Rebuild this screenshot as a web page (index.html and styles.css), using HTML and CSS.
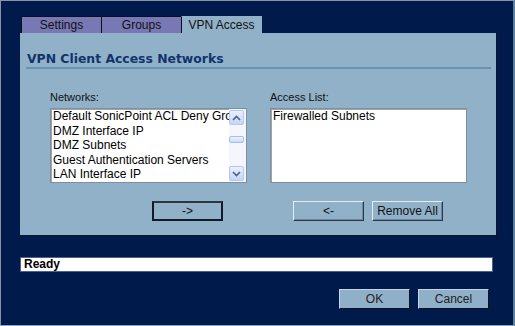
FILE: index.html
```html
<!DOCTYPE html>
<html>
<head>
<meta charset="utf-8">
<link rel="stylesheet" href="styles.css">
</head>
<body>
<div class="frame">
  <div class="tabs">
    <div class="tab">Settings</div>
    <div class="tab">Groups</div>
    <div class="tab active">VPN Access</div>
  </div>
  <div class="panel">
    <h1 class="heading">VPN Client Access Networks</h1>
    <div class="lists">
      <div class="col">
        <div class="label">Networks:</div>
        <div class="listbox">
          <div class="items">
            <div>Default SonicPoint ACL Deny Group</div>
            <div>DMZ Interface IP</div>
            <div>DMZ Subnets</div>
            <div>Guest Authentication Servers</div>
            <div>LAN Interface IP</div>
          </div>
          <div class="scrollbar">
            <div class="sbtn"><svg width="9" height="6" viewBox="0 0 9 6"><path d="M1 5 L4.5 1.5 L8 5" fill="none" stroke="#4d6185" stroke-width="1.6"/></svg></div>
            <div class="track"><div class="thumb"></div></div>
            <div class="sbtn"><svg width="9" height="6" viewBox="0 0 9 6"><path d="M1 1 L4.5 4.5 L8 1" fill="none" stroke="#4d6185" stroke-width="1.6"/></svg></div>
          </div>
        </div>
        <div class="btnrow center">
          <button class="btn primary">-&gt;</button>
        </div>
      </div>
      <div class="col">
        <div class="label">Access List:</div>
        <div class="listbox">
          <div class="items">
            <div>Firewalled Subnets</div>
          </div>
        </div>
        <div class="btnrow right">
          <button class="btn">&lt;-</button>
          <button class="btn">Remove All</button>
        </div>
      </div>
    </div>
  </div>
  <div class="status">Ready</div>
  <div class="actions">
    <button class="dbtn">OK</button>
    <button class="dbtn">Cancel</button>
  </div>
</div>
</body>
</html>
```
FILE: styles.css
```css
html, body {
  margin: 0;
  padding: 0;
  background: #001b4b;
}
.frame {
  box-sizing: border-box;
  width: 515px;
  height: 326px;
  background: #001b4b;
  border-top: 1px solid #8a93a3;
  border-left: 1px solid #8a93a3;
  border-right: 2px solid #5f7f9f;
  border-bottom: 1px solid #8aa6c0;
  padding: 15px 0 0 19px;
  font-family: "Liberation Sans", Arial, sans-serif;
}
.tabs {
  display: flex;
  height: 17px;
  padding-left: 1px;
}
.tab {
  box-sizing: border-box;
  width: 81px;
  height: 17px;
  background: #7878b4;
  border: 1px solid #0a0f28;
  border-bottom: none;
  margin-right: -1px;
  color: #111;
  font-size: 12px;
  line-height: 16px;
  text-align: center;
}
.tab.active {
  background: #90b1c8;
  border-color: #90b1c8;
  border-left: 1px solid #0a0f28;
}
.panel {
  box-sizing: border-box;
  width: 477px;
  height: 203px;
  background: #90b1c8;
  border-right: 1px solid #0b1430;
  border-bottom: 1px solid #0b1430;
  padding: 17px 5px 0 6px;
}
.heading {
  margin: 0;
  font-family: "DejaVu Sans", Verdana, sans-serif;
  font-weight: bold;
  font-size: 12.4px;
  color: #12346a;
  line-height: 17px;
  padding-left: 1px;
  border-bottom: 2px solid #6c93ae;
  width: 465px;
  box-sizing: border-box;
}
.lists {
  display: flex;
  padding: 22px 0 0 24px;
  gap: 23px;
}
.col {
  display: flex;
  flex-direction: column;
  width: 197px;
}
.label {
  font-size: 11px;
  color: #111;
  line-height: 13px;
  height: 14px;
}
.listbox {
  margin-top: 3px;
  box-sizing: border-box;
  width: 197px;
  height: 75px;
  background: #fff;
  border: 1px solid #7c8ea4;
  box-shadow: inset 1px 1px 0 #a4a4a4;
  display: flex;
  overflow: hidden;
}
.items {
  flex: 1;
  padding: 0 0 0 2px;
  font-size: 12px;
  line-height: 14.6px;
  color: #000;
  white-space: nowrap;
  overflow: hidden;
}
.scrollbar {
  width: 16px;
  display: flex;
  flex-direction: column;
  background: #f3f5fb;
  padding: 1px 1px 1px 0;
}
.sbtn {
  box-sizing: border-box;
  height: 15px;
  width: 15px;
  border: 1px solid #b6c8ee;
  border-radius: 2px;
  background: linear-gradient(#e8efff, #c5d5f7);
  display: flex;
  align-items: center;
  justify-content: center;
}
.track {
  flex: 1;
  background: #f4f6fc;
}
.thumb {
  margin-top: 11px;
  height: 7px;
  width: 15px;
  box-sizing: border-box;
  border: 1px solid #a8bcee;
  border-radius: 2px;
  background: linear-gradient(#eef3ff, #cbd8f7);
}
.btnrow {
  display: flex;
  margin-top: 18px;
  gap: 8px;
}
.btnrow.center {
  padding-left: 102px;
}
.btnrow.right {
  padding-left: 23px;
}
.btn {
  box-sizing: border-box;
  height: 20px;
  width: 71px;
  padding: 0;
  background: #90b1c8;
  border: 1px solid;
  border-color: #e4eef5 #2c3848 #2c3848 #e4eef5;
  box-shadow: inset -1px -1px 0 #6d8aa2;
  font-family: "Liberation Sans", Arial, sans-serif;
  font-size: 12px;
  color: #111;
}
.btn.primary {
  border: 2px solid #111a28;
  border-top-color: #2a3445;
  box-shadow: none;
}
.status {
  margin-top: 21px;
  width: 473px;
  height: 15px;
  box-sizing: border-box;
  background: #fff;
  border: 1px solid #4a628a;
  padding-left: 3px;
  font-family: "Liberation Sans", Arial, sans-serif;
  font-weight: bold;
  font-size: 12px;
  line-height: 13px;
  color: #000;
}
.actions {
  display: flex;
  justify-content: flex-end;
  gap: 8px;
  width: 469px;
  margin-top: 17px;
}
.dbtn {
  box-sizing: border-box;
  width: 71px;
  height: 20px;
  padding: 0;
  background: #8fb0c8;
  border: 1px solid;
  border-color: #c5d6e2 #0e1522 #0e1522 #c5d6e2;
  font-family: "Liberation Sans", Arial, sans-serif;
  font-size: 12px;
  color: #222;
}
```
